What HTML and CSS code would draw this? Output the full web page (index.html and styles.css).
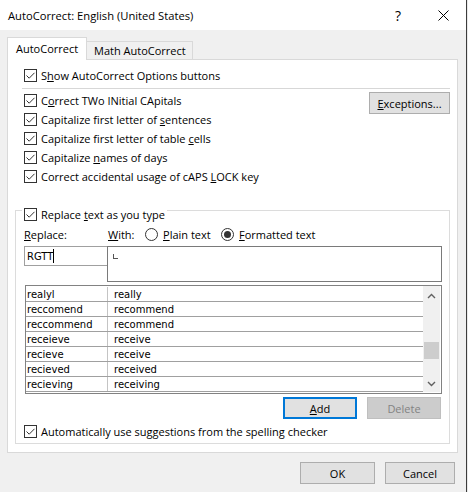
FILE: index.html
```html
<!DOCTYPE html>
<html>
<head>
<meta charset="utf-8">
<title>AutoCorrect</title>
<link rel="stylesheet" href="styles.css">
</head>
<body>
<svg class="defs" width="0" height="0" aria-hidden="true">
  <defs>
    <symbol id="chk" viewBox="0 0 13 13">
      <rect x="0.5" y="0.5" width="12" height="12" fill="#fff" stroke="#333"/>
      <path d="M2.5 6.5 5.2 9.2 10.5 3.8" fill="none" stroke="#333" stroke-width="1"/>
    </symbol>
  </defs>
</svg>
<div class="dialog">
  <div class="titlebar">
    <div class="title">AutoCorrect: English (United States)</div>
    <div class="tb-btn help">?</div>
    <div class="tb-btn close">
      <svg width="11" height="11" viewBox="0 0 11 11"><path d="M0.5 0.5 10.5 10.5 M10.5 0.5 0.5 10.5" stroke="#000" stroke-width="1" fill="none"/></svg>
    </div>
  </div>
  <div class="client">
    <div class="tabs">
      <div class="tab active">AutoCorrect</div>
      <div class="tab">Math AutoCorrect</div>
    </div>
    <div class="panel">
      <div class="row show"><svg class="cb"><use href="#chk"/></svg><span>S<u>h</u>ow AutoCorrect Options buttons</span></div>
      <div class="sep"></div>
      <div class="opts">
        <div class="opt-list">
          <div class="row"><svg class="cb"><use href="#chk"/></svg><span>C<u>o</u>rrect TWo INitial CApitals</span></div>
          <div class="row"><svg class="cb"><use href="#chk"/></svg><span>Capitalize first letter of <u>s</u>entences</span></div>
          <div class="row"><svg class="cb"><use href="#chk"/></svg><span>Capitalize first letter of table <u>c</u>ells</span></div>
          <div class="row"><svg class="cb"><use href="#chk"/></svg><span>Capitalize <u>n</u>ames of days</span></div>
          <div class="row"><svg class="cb"><use href="#chk"/></svg><span>Correct accidental usage of cAPS <u>L</u>OCK key</span></div>
        </div>
        <div class="btn exceptions"><span><u>E</u>xceptions...</span></div>
      </div>
      <div class="group">
        <div class="legend"><svg class="cb"><use href="#chk"/></svg><span>Replace <u>t</u>ext as you type</span></div>
        <div class="labels">
          <span class="lbl-replace"><u>R</u>eplace:</span>
          <span class="lbl-with"><u>W</u>ith:</span>
          <span class="radio plain">
            <svg class="rb" viewBox="0 0 13 13"><circle cx="6.5" cy="6.5" r="6" fill="#fff" stroke="#333"/></svg>
            <span><u>P</u>lain text</span>
          </span>
          <span class="radio">
            <svg class="rb" viewBox="0 0 13 13"><circle cx="6.5" cy="6.5" r="6" fill="#fff" stroke="#333"/><circle cx="6.5" cy="6.5" r="3.5" fill="#333"/></svg>
            <span><u>F</u>ormatted text</span>
          </span>
        </div>
        <div class="inputs">
          <div class="replace-in"><span>RGTT</span><span class="caret"></span></div>
          <div class="with-in"><span class="mark"></span></div>
        </div>
        <div class="list">
          <div class="table">
            <div class="tr"><span class="td1">realyl</span><span class="td2">really</span></div>
            <div class="tr"><span class="td1">reccomend</span><span class="td2">recommend</span></div>
            <div class="tr"><span class="td1">reccommend</span><span class="td2">recommend</span></div>
            <div class="tr"><span class="td1">receieve</span><span class="td2">receive</span></div>
            <div class="tr"><span class="td1">recieve</span><span class="td2">receive</span></div>
            <div class="tr"><span class="td1">recieved</span><span class="td2">received</span></div>
            <div class="tr"><span class="td1">recieving</span><span class="td2">receiving</span></div>
          </div>
          <div class="scroll">
            <div class="arrow up"><svg width="9" height="6" viewBox="0 0 9 6"><path d="M1 5 4.5 1.5 8 5" fill="none" stroke="#606060" stroke-width="1.4"/></svg></div>
            <div class="track"><div class="thumb"></div></div>
            <div class="arrow down"><svg width="9" height="6" viewBox="0 0 9 6"><path d="M1 1 4.5 4.5 8 1" fill="none" stroke="#606060" stroke-width="1.4"/></svg></div>
          </div>
        </div>
        <div class="actions">
          <div class="btn add"><span><u>A</u>dd</span></div>
          <div class="btn delete"><span>Delete</span></div>
        </div>
        <div class="row auto"><svg class="cb"><use href="#chk"/></svg><span>Automatically use suggestions from the spelling checker</span></div>
      </div>
    </div>
    <div class="footer">
      <div class="btn ok"><span>OK</span></div>
      <div class="btn cancel"><span>Cancel</span></div>
    </div>
  </div>
</div>
</body>
</html>
```

FILE: styles.css
```css
* { box-sizing: border-box; }
html, body { margin: 0; padding: 0; }
body {
  width: 468px;
  height: 492px;
  overflow: hidden;
  background: #e9e9e9;
  font-family: "Open Sans", "Noto Sans", sans-serif;
  font-size: 11px;
  color: #000;
}
.defs { position: absolute; width: 0; height: 0; overflow: hidden; }
u { text-decoration: underline; text-underline-offset: 1px; }

.dialog {
  width: 467px;
  height: 492px;
  background: #f0f0f0;
  border-right: 1px solid #3c3c3c;
  display: flex;
  flex-direction: column;
}

.titlebar {
  height: 30px;
  background: #fff;
  display: flex;
  align-items: center;
  flex: none;
}
.title { flex: 1; padding-left: 8px; font-size: 11.2px; }
.tb-btn {
  width: 46px;
  height: 30px;
  display: flex;
  align-items: center;
  justify-content: center;
}
.help { font-size: 14px; padding-left: 2px; }

.client { padding: 7px 0 0 7px; flex: 1; }

.tabs { display: flex; align-items: flex-end; height: 22px; }
.tab {
  height: 18px;
  padding-left: 7px;
  width: 106px;
  border: 1px solid #d9d9d9;
  border-left: none;
  border-bottom: none;
  display: flex;
  align-items: center;
}
.tab.active {
  width: 80px;
  height: 23px;
  margin-bottom: -1px;
  background: #fff;
  border-left: 1px solid #d9d9d9;
  position: relative;
  z-index: 1;
  padding-left: 8px;
  padding-bottom: 1px;
}

.panel {
  width: 451px;
  height: 394px;
  background: #fff;
  border: 1px solid #d9d9d9;
}

.row {
  height: 19px;
  display: flex;
  align-items: center;
  gap: 4px;
  padding-left: 16px;
  white-space: nowrap;
}
.cb { width: 13px; height: 13px; flex: none; }
.show { margin-top: 6px; }

.sep {
  margin: 3px 0 0 14px;
  width: 428px;
  height: 1px;
  background: #d7d7d7;
}

.opts {
  display: flex;
  justify-content: space-between;
  align-items: flex-start;
  margin-top: 2px;
}
.btn {
  width: 74px;
  height: 22px;
  border: 1px solid #adadad;
  background: #e1e1e1;
  display: flex;
  align-items: center;
  justify-content: center;
  flex: none;
  white-space: nowrap;
}
.exceptions { width: 81px; margin: 1px 7px 0 0; }

.group {
  margin: 24px 0 0 7px;
  width: 435px;
  height: 234px;
  border: 1px solid #dcdcdc;
}
.legend {
  display: flex;
  align-items: center;
  gap: 4px;
  height: 18px;
  width: fit-content;
  margin: -6px 0 0 6px;
  padding: 0 2px;
  background: #fff;
  white-space: nowrap;
}

.labels {
  height: 18px;
  margin-top: 2px;
  padding-left: 8px;
  display: flex;
  align-items: center;
  white-space: nowrap;
}
.lbl-replace { width: 84px; }
.lbl-with { width: 37px; }
.radio { display: flex; align-items: center; gap: 5px; }
.radio.plain { width: 76px; }
.rb { width: 13px; height: 13px; flex: none; }

.inputs {
  display: flex;
  align-items: flex-start;
  margin-top: 3px;
  padding-left: 8px;
}
.replace-in {
  width: 84px;
  height: 20px;
  border: 1px solid #a0a0a0;
  background: #fff;
  display: flex;
  align-items: center;
  padding-left: 2px;
  font-family: "DejaVu Sans", sans-serif;
  font-size: 10px;
}
.caret { width: 1px; height: 14px; background: #000; margin-left: 0; }
.with-in {
  width: 335px;
  height: 36px;
  margin-left: -1px;
  border: 1px solid #7a7a7a;
  background: #fff;
  padding: 7px 0 0 5px;
}
.mark {
  display: block;
  width: 5px;
  height: 5px;
  border-left: 1px solid #555;
  border-bottom: 1px solid #555;
}

.list {
  margin: 3px 0 0 9px;
  width: 417px;
  height: 109px;
  border: 1px solid #828282;
  background: #fff;
  display: flex;
}
.table { width: 397px; padding-top: 1px; }
.tr {
  height: 15px;
  display: flex;
  align-items: center;
  border-bottom: 1px solid #a0a0a0;
  font-family: "DejaVu Sans", sans-serif;
  font-size: 10px;
  white-space: nowrap;
}
.td1 {
  width: 82px;
  height: 100%;
  display: flex;
  align-items: center;
  padding-left: 1px;
  border-right: 1px solid #c4c4c4;
}
.td2 { padding-left: 6px; }

.scroll {
  width: 17px;
  margin: 0 1px 1px 0;
  background: #f0f0f0;
  display: flex;
  flex-direction: column;
}
.arrow { height: 17px; display: flex; align-items: center; justify-content: center; flex: none; }
.arrow.up { padding-top: 3px; }
.arrow.down { padding-bottom: 0; }
.track { flex: 1; }
.thumb { margin: 39px 1px 0 1px; height: 17px; background: #cdcdcd; }

.actions {
  display: flex;
  justify-content: flex-end;
  gap: 10px;
  margin-top: 3px;
  padding-right: 8px;
}
.add { border: 2px solid #0078d7; }
.delete { background: #cccccc; border-color: #bfbfbf; color: #838383; }

.auto { margin-top: 3px; padding-left: 8px; }

.footer {
  display: flex;
  justify-content: flex-end;
  gap: 10px;
  margin-top: 9px;
  padding-right: 11px;
}
.ok { width: 75px; }
.cancel { width: 70px; }
```
